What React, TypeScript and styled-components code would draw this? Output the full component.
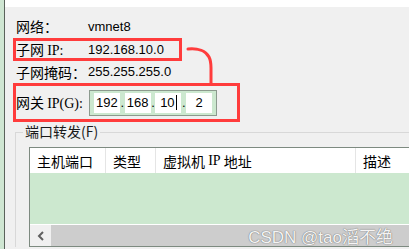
import React from 'react';
import styled, { createGlobalStyle } from 'styled-components';

const GlobalStyle = createGlobalStyle`
  html, body {
    margin: 0;
    padding: 0;
    background: #f0f0f0;
    overflow: hidden;
  }
  body {
    font-family: "Noto Sans CJK SC", "Liberation Sans", sans-serif;
    color: #000;
  }
`;

const Window = styled.div`
  position: relative;
  display: flex;
  width: 409px;
  height: 249px;
  overflow: hidden;
  background: #f0f0f0;
`;

const SideStrip = styled.div`
  width: 4px;
  flex-shrink: 0;
  background: #cfe6d2;
  border-right: 1px solid #5a625b;
`;

const Main = styled.div`
  flex: 1;
  display: flex;
  flex-direction: column;
  min-width: 0;
`;

const TopStrip = styled.div`
  height: 7px;
  background: #fff;
`;

const Form = styled.div`
  display: flex;
  flex-direction: column;
  padding: 8px 0 0 8px;
`;

const Row = styled.div<{ $mark?: boolean; $width?: number; $height: number }>`
  display: flex;
  align-items: center;
  box-sizing: border-box;
  height: ${p => p.$height}px;
  width: ${p => (p.$width ? `${p.$width}px` : 'auto')};
  border: 3px solid ${p => (p.$mark ? '#ff3c3c' : 'transparent')};
`;

const Label = styled.div`
  width: 72px;
  flex-shrink: 0;
  font-size: 14px;
  line-height: 17px;
  white-space: nowrap;
`;

const Latin = styled.span`
  font-family: "Liberation Serif", "DejaVu Serif", serif;
  font-size: 14px;
`;

const Value = styled.div`
  font-family: "Liberation Sans", Arial, sans-serif;
  font-size: 13px;
  line-height: 16px;
`;

const IpBox = styled.div`
  display: flex;
  align-items: center;
  box-sizing: border-box;
  width: 128px;
  height: 26px;
  margin-left: 1px;
  padding: 0 4px;
  border: 1px solid #8c9a8e;
  background: #cce8cf;
  font-family: "Liberation Sans", Arial, sans-serif;
  font-size: 13px;
`;

const Segment = styled.div`
  display: flex;
  align-items: center;
  justify-content: center;
  width: 26px;
  height: 20px;
  background: #fff;
  line-height: 16px;
`;

const Dot = styled.div`
  width: 5px;
  text-align: center;
  line-height: 16px;
`;

const Caret = styled.span`
  display: inline-block;
  width: 1px;
  height: 15px;
  margin-left: 1px;
  background: #000;
`;

const GroupBox = styled.div`
  position: relative;
  margin: 10px 0 0 2px;
  padding: 14px 0 0 13px;
  border-top: 1px solid #d8d8d8;
  border-left: 1px solid #d8d8d8;
`;

const GroupTitle = styled.div`
  position: absolute;
  top: -11px;
  left: 7px;
  padding: 0 2px;
  background: #f0f0f0;
  font-size: 14px;
  line-height: 18px;
  color: #1a1a1a;
`;

const Table = styled.div`
  width: 420px;
  border: 1px solid #7d8a80;
  display: flex;
  flex-direction: column;
`;

const HeaderRow = styled.div`
  display: grid;
  grid-template-columns: 76px 50px 200px 1fr;
  height: 25px;
  background: #fff;
`;

const HeaderCell = styled.div`
  display: flex;
  align-items: center;
  padding-left: 7px;
  border-right: 1px solid #e5e5e5;
  font-size: 14px;
  white-space: nowrap;
  &:last-child {
    border-right: none;
  }
`;

const Body = styled.div`
  height: 51px;
  background: #cce8cf;
`;

const ScrollBar = styled.div`
  display: flex;
  height: 21px;
  border-top: 1px solid #fff;
  background: #f0f0f0;
`;

const ArrowBtn = styled.div`
  width: 21px;
  display: flex;
  align-items: center;
  justify-content: center;
`;

const Thumb = styled.div`
  flex: 1;
  background: #cdcdcd;
`;

const Annotation = styled.svg`
  position: absolute;
  left: 0;
  top: 0;
  pointer-events: none;
`;

const Watermark = styled.div`
  position: absolute;
  right: 16px;
  top: 229px;
  font-family: "Liberation Sans", "Noto Sans CJK SC", sans-serif;
  font-size: 17px;
  line-height: 18px;
  color: rgba(252, 252, 252, 0.95);
  text-shadow: 0 0 1px #7a7a7a, 0 0 1px #7a7a7a;
  white-space: nowrap;
`;

export default function App() {
  return (
    <>
      <GlobalStyle />
      <Window>
        <SideStrip />
        <Main>
          <TopStrip />
          <Form>
            <Row $height={23}>
              <Label>网络：</Label>
              <Value>vmnet8</Value>
            </Row>
            <Row $height={23} $mark $width={169}>
              <Label>子网 <Latin>IP:</Latin></Label>
              <Value>192.168.10.0</Value>
            </Row>
            <Row $height={22}>
              <Label>子网掩码：</Label>
              <Value>255.255.255.0</Value>
            </Row>
            <Row $height={39} $mark $width={227}>
              <Label>网关 <Latin>IP(G):</Latin></Label>
              <IpBox>
                <Segment>192</Segment>
                <Dot>.</Dot>
                <Segment>168</Segment>
                <Dot>.</Dot>
                <Segment>10<Caret /></Segment>
                <Dot>.</Dot>
                <Segment>2</Segment>
              </IpBox>
            </Row>
            <GroupBox>
              <GroupTitle>端口转发(F)</GroupTitle>
              <Table>
                <HeaderRow>
                  <HeaderCell>主机端口</HeaderCell>
                  <HeaderCell>类型</HeaderCell>
                  <HeaderCell>虚拟机&nbsp;<Latin>IP</Latin>&nbsp;地址</HeaderCell>
                  <HeaderCell>描述</HeaderCell>
                </HeaderRow>
                <Body />
                <ScrollBar>
                  <ArrowBtn>
                    <svg width="8" height="10" viewBox="0 0 8 10">
                      <path d="M6 1 L2 5 L6 9" fill="none" stroke="#606060" strokeWidth="2" />
                    </svg>
                  </ArrowBtn>
                  <Thumb />
                </ScrollBar>
              </Table>
            </GroupBox>
          </Form>
        </Main>
        <Annotation width="409" height="249" viewBox="0 0 409 249">
          <path
            d="M188 49 C198 48 206 51 209 57 C211 61 211 64 211 68 L211 84"
            fill="none"
            stroke="#ff3c3c"
            strokeWidth="3"
            strokeLinecap="round"
          />
        </Annotation>
        <Watermark>CSDN @tao滔不绝</Watermark>
      </Window>
    </>
  );
}
